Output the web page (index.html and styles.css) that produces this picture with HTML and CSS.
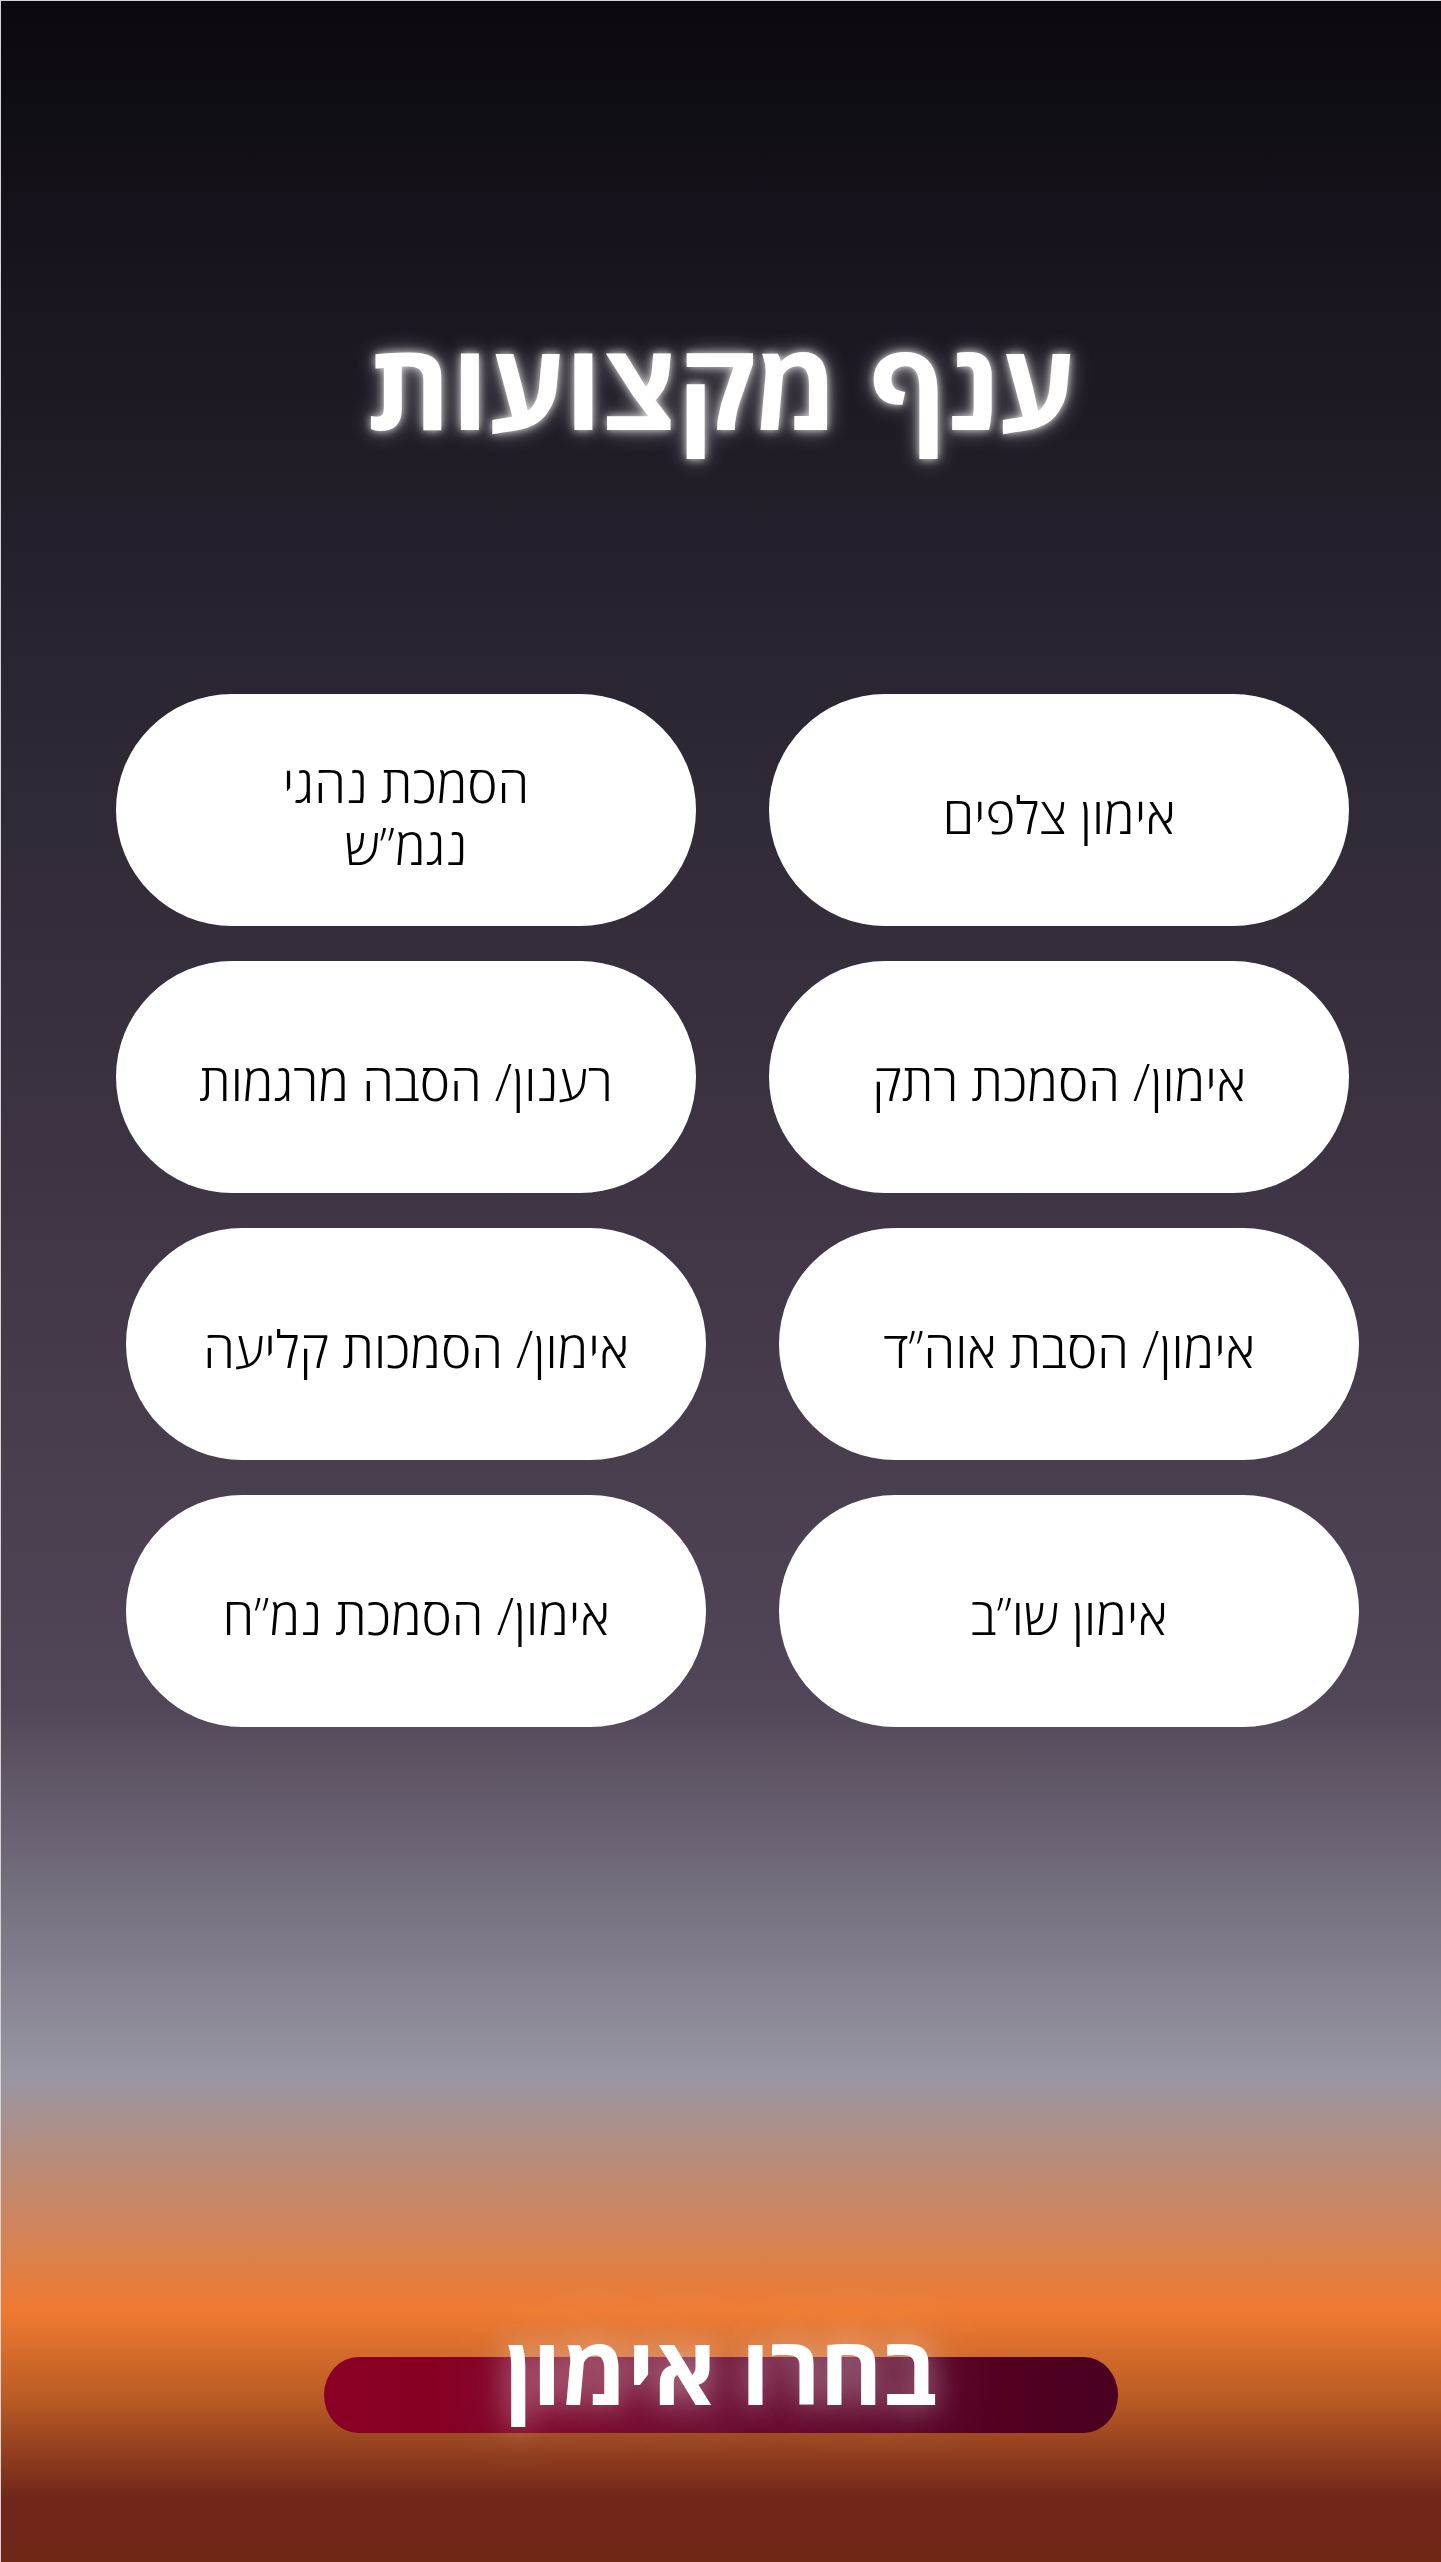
FILE: index.html
```html
<!DOCTYPE html>
<html lang="he" dir="rtl">
<head>
<meta charset="utf-8">
<title>ענף מקצועות</title>
<link rel="stylesheet" href="styles.css">
</head>
<body>
<main class="page">
  <h1 class="title">ענף מקצועות</h1>
  <section class="options">
    <div class="row">
      <a class="option" href="#">אימון צלפים</a>
      <a class="option" href="#">הסמכת נהגי<br>נגמ”ש</a>
    </div>
    <div class="row">
      <a class="option" href="#">אימון/ הסמכת רתק</a>
      <a class="option" href="#">רענון/ הסבה מרגמות</a>
    </div>
    <div class="row row--shift">
      <a class="option" href="#">אימון/ הסבת אוה”ד</a>
      <a class="option" href="#">אימון/ הסמכות קליעה</a>
    </div>
    <div class="row row--shift">
      <a class="option" href="#">אימון שו”ב</a>
      <a class="option" href="#">אימון/ הסמכת נמ”ח</a>
    </div>
  </section>
  <div class="cta">
    <span class="cta-text">בחרו אימון</span>
  </div>
</main>
</body>
</html>
```

FILE: styles.css
```css
html, body {
  margin: 0;
  padding: 0;
}

body {
  width: 1441px;
  height: 2562px;
  overflow: hidden;
  font-family: "Open Sans", "Liberation Sans", "DejaVu Sans", sans-serif;
}

.page {
  box-sizing: border-box;
  width: 1441px;
  height: 2562px;
  border-top: 1px solid #d4d4d6;
  border-left: 1px solid #d4d4d6;
  display: flex;
  flex-direction: column;
  align-items: stretch;
  background: linear-gradient(to bottom,
    #0b090f 0px,
    #19161f 300px,
    #2c2632 700px,
    #3f3544 1200px,
    #514657 1700px,
    #9896a4 2075px,
    #ef7a31 2310px,
    #b85a25 2400px,
    #70271a 2497px,
    #6f2718 2562px);
}

.title {
  margin: 322px 0 0;
  height: 121px;
  color: #ffffff;
  text-align: center;
  font-size: 121px;
  font-weight: 700;
  line-height: 121px;
  text-shadow: 0 0 8px rgba(255, 255, 255, 0.85), 0 0 22px rgba(255, 255, 255, 0.45);
}

.options {
  margin-top: 250px;
  display: flex;
  flex-direction: column;
  gap: 35px;
}

.row {
  display: flex;
  gap: 73px;
  padding-right: 92px;
}

.row--shift {
  padding-right: 82px;
}

.option {
  box-sizing: border-box;
  width: 580px;
  height: 232px;
  border-radius: 116px;
  background: #ffffff;
  color: #000000;
  text-decoration: none;
  display: flex;
  align-items: center;
  justify-content: center;
  text-align: center;
  font-size: 51px;
  font-weight: 300;
  line-height: 62px;
  padding-top: 8px;
}

.cta {
  margin: auto auto 129px;
  width: 794px;
  height: 76px;
  border-radius: 34px / 38px;
  background: linear-gradient(to right, #8a0024 0%, #860024 15%, #6a0a30 50%, #520022 85%, #4a0020 100%);
  display: flex;
  justify-content: center;
  align-items: flex-start;
}

.cta-text {
  margin-top: -36px;
  color: #ffffff;
  font-size: 95px;
  font-weight: 700;
  line-height: 95px;
  text-shadow: 0 0 30px rgba(255, 255, 255, 0.45), 0 0 70px rgba(255, 255, 255, 0.35);
}
```
